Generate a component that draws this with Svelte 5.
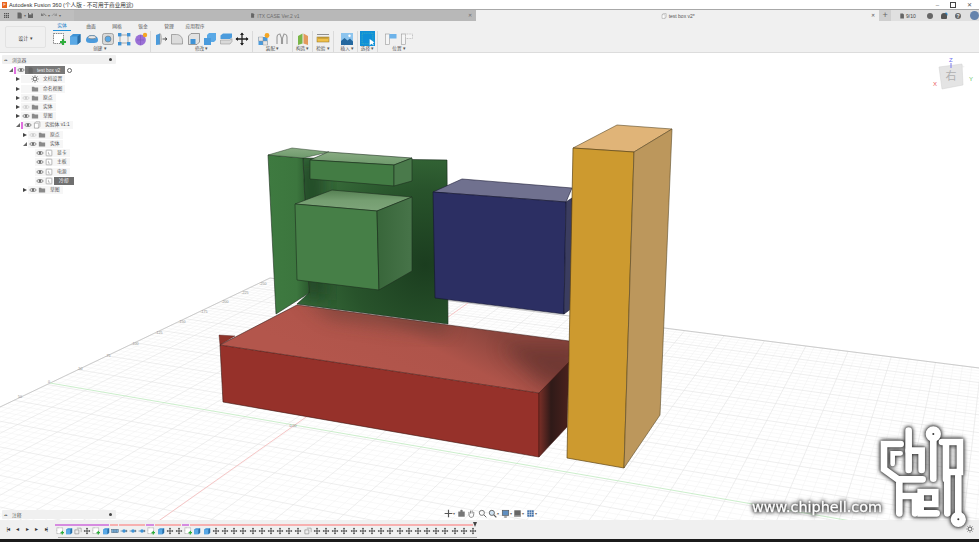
<script>
  // icon bodies, all drawn on a 14x14 box
  const icons = {
    sketch: '<rect x="1.5" y="1.5" width="10" height="10" fill="#fff" stroke="#666" stroke-dasharray="1.5 .8" stroke-width=".8"/><path d="M11 7v6M8 10h6" stroke="#2eae3c" stroke-width="2.2"/>',
    box: '<path d="M2 4.5 5 2h7.5v8L9.5 12.5H2z" fill="#3f93d6"/><path d="M2 4.5h7.5v8H2z" fill="#5aa9e6"/><path d="M9.5 4.5 12.5 2v8l-3 2.5z" fill="#2b6ea6"/>',
    hole: '<path d="M1 8c0-3 3-5 6-5s6 2 6 5-3 3-6 3-6 0-6-3z" fill="#4b9bdc"/><ellipse cx="7" cy="5.2" rx="4" ry="1.6" fill="#e9e9e9" stroke="#666" stroke-width=".5"/>',
    thread: '<rect x="1.5" y="1.5" width="11" height="11" rx="2" fill="#d9d9d9" stroke="#888" stroke-width=".7"/><circle cx="7" cy="7" r="3" fill="#5aa9e6" stroke="#777" stroke-width=".6"/>',
    points: '<path d="M3 3h8v8H3z" fill="none" stroke="#888" stroke-width=".7"/><g fill="#3f93d6"><rect x="1" y="1" width="3.4" height="3.4"/><rect x="10" y="1" width="3.4" height="3.4"/><rect x="1" y="10" width="3.4" height="3.4"/><rect x="10" y="10" width="3.4" height="3.4"/></g>',
    star: '<circle cx="6.5" cy="8" r="5.4" fill="#9a6fd6"/><path d="M3 8h7M6.5 3v10" stroke="#7d54b8" stroke-width=".6"/><circle cx="11" cy="3" r="2.2" fill="#f5a623"/>',
    press: '<path d="M2 3 6 1.5v11L2 13z" fill="#4b9bdc"/><path d="M6 1.5c2 1 2 10 0 11z" fill="#ddd" stroke="#888" stroke-width=".5"/><path d="M8.5 7h4M11 5.5 13 7l-2 1.5" stroke="#333" stroke-width=".8" fill="none"/>',
    fillet: '<path d="M1.5 2.5h5c3.5 0 6 2.8 6 6v3.500h-11z" fill="#dcdcdc" stroke="#888" stroke-width=".7"/>',
    chamfer: '<path d="M1.5 4 4 1.500h8.500v8.500L10 12.500H1.500z" fill="#e2e2e2" stroke="#777" stroke-width=".7"/><path d="M3.500 7h5v5h-5z" fill="#3f93d6"/>',
    combine: '<path d="M1 6h7v7H1z" fill="#4b9bdc"/><path d="M4 3 6 1h7v7l-2 2H8V6H4z" fill="#5aa9e6"/>',
    offset: '<path d="M1.500 3.500 4 1.500h9v4l-2 1.500H1.500z" fill="#4b9bdc"/><path d="M1.500 8h9.500l2-1.500v3l-2 2.500H1.500z" fill="#d9d9d9" stroke="#888" stroke-width=".5"/>',
    move: '<path d="M7 1v12M1 7h12" stroke="#222" stroke-width="1.300"/><path d="M7 .5 5 3h4zM7 13.500 5 11h4zM.5 7 3 5v4zM13.500 7 11 5v4z" fill="#222"/>',
    joint: '<path d="M1.500 5h9v8h-9z" fill="#4b9bdc"/><path d="M6 5V9H1.500V5zM6 9h4.500v4H6z" fill="#e6e6e6" stroke="#888" stroke-width=".4"/><circle cx="10" cy="3.500" r="2.400" fill="#f5a623"/>',
    asm: '<path d="M2 12V5c0-2 2-3 3-3l1.500 4v6M12 12V5c0-2-2-3-3-3L7.500 6v6" fill="none" stroke="#9a9a9a" stroke-width="1.100"/>',
    plane: '<path d="M2 4 6.500 1.500v10L2 13z" fill="#7ab648"/><path d="M7.500 1.500 12 4v9L7.500 11.500z" fill="#e39a5d"/>',
    ruler: '<rect x="1" y="5" width="12" height="5" fill="#f0c04a" stroke="#8a6d1e" stroke-width=".5"/><path d="M3 5v2M5 5v2M7 5v2M9 5v2M11 5v2" stroke="#6b5414" stroke-width=".5"/><path d="M1 2.500h12" stroke="#666" stroke-width=".7"/>',
    image: '<rect x="1" y="1" width="12" height="12" fill="#8cc4ee"/><path d="M1 13V9l3.500-3 3 2.500L10 6.500l3 3V13z" fill="#25689f"/><circle cx="9.500" cy="3.800" r="1.200" fill="#fff"/>',
    select: '<rect width="14" height="14" fill="#0f8fd8"/><rect x="2" y="2" width="10" height="10" fill="none" stroke="#66d0a0" stroke-width=".5" stroke-dasharray="1 1"/><path d="M9 7.500v6l1.500-1.500 2.500 1.500-1-2.200 1.500-.5z" fill="#fff"/>',
    pos1: '<rect x="1.500" y="2" width="4" height="10.500" fill="#f5f5f5" stroke="#999" stroke-width=".6"/><path d="M5.500 2h7v4.500h-7z" fill="#6db3ea"/>',
    pos2: '<rect x="1.500" y="2" width="4" height="10.500" fill="#f5f5f5" stroke="#999" stroke-width=".6"/><path d="M5.500 2h7v4.500h-7z" fill="#f5f5f5" stroke="#999" stroke-width=".5" stroke-dasharray="1 .6"/>',
    copy: '<path d="M1.500 5h7v7h-7z" fill="#eee" stroke="#666" stroke-width=".8"/><path d="M5 2h7.500v7" fill="none" stroke="#666" stroke-width=".8"/>',
    small: '<path d="M1 7h12" stroke="#346fa0" stroke-width="1.200"/><circle cx="7" cy="7" r="3" fill="#3f93d6"/><path d="M11 5v4" stroke="#333"/>',
    dash: '<rect x="1" y="4" width="12" height="6" fill="#7db5e0" stroke="#345" stroke-width=".6"/><path d="M4 4v6M7 4v6M10 4v6" stroke="#345" stroke-width=".6"/>',
    tmove: '<path d="M7 2v10M2 7h10" stroke="#333" stroke-width="1.400"/><path d="M7 1 5.500 3.500h3zM7 13l-1.500-2.500h3zM1 7l2.500-1.500v3zM13 7l-2.500-1.500v3z" fill="#333"/>',
    eye: '<path d="M1 7c2-3.500 10-3.500 12 0-2 3.500-10 3.500-12 0z" fill="none" stroke="currentColor" stroke-width="1.300"/><circle cx="7" cy="7" r="2" fill="currentColor"/>',
    folder: '<path d="M1.500 3h4l1 1.500h6v7h-11z" fill="#8a8a8a"/>',
    gear: '<circle cx="7" cy="7" r="3.300" fill="none" stroke="#7a7a7a" stroke-width="2"/><path d="M7 .5v13M.5 7h13M2.400 2.400l9.200 9.200M11.600 2.400l-9.200 9.200" stroke="#7a7a7a" stroke-width="1.500" stroke-dasharray="2 9.500"/>',
    comp: '<path d="M2.500 4 5 1.500h7v8L9.500 12.500h-7z" fill="#fff" stroke="#777" stroke-width=".9"/><path d="M2.500 4h7v8.500" fill="none" stroke="#777" stroke-width=".7"/>',
    body: '<rect x="2" y="2" width="10" height="10" rx="1" fill="#fff" stroke="#777" stroke-width=".9"/><path d="M6 5v4h3" fill="none" stroke="#777" stroke-width=".8"/>',
    doc: '<path d="M3 1h6l2.500 2.500V13H3z" fill="#666"/>',
    grid: '<path d="M2 2h2.500v2.500H2zM5.800 2h2.500v2.500H5.800zM9.500 2H12v2.500H9.500zM2 5.800h2.500v2.500H2zM5.800 5.800h2.500v2.500H5.800zM9.500 5.800H12v2.500H9.500zM2 9.500h2.500V12H2zM5.800 9.500h2.500V12H5.800zM9.500 9.500H12V12H9.500z" fill="#555"/>',
    save: '<path d="M2 2h8l2 2v8H2z" fill="#666"/><rect x="4" y="2" width="5" height="3" fill="#ccc"/>',
    undo: '<path d="M3 7c2-4 7-4 9 1M3 3v4h4" fill="none" stroke="#666" stroke-width="1.500"/>',
    redo: '<path d="M11 7C9 3 4 3 2 8M11 3v4H7" fill="none" stroke="#888" stroke-width="1.500"/>',
    navorbit: '<path d="M7 1v12M1 7h12" stroke="#555" stroke-width="1.800"/>',
    navcam: '<rect x="2" y="4" width="10" height="8" fill="#777"/><circle cx="7" cy="3" r="2" fill="#777"/>',
    navhand: '<path d="M3 7V4.500M5.500 7V2.500M8 7V2.500M10.500 7V4.500M3 7c0 5 1.500 6 4 6s3.500-2 3.500-6" fill="none" stroke="#666" stroke-width="1.200"/>',
    navzoom: '<circle cx="6" cy="6" r="4" fill="none" stroke="#666" stroke-width="1.300"/><path d="M9 9l4 4" stroke="#666" stroke-width="1.500"/>',
    navfit: '<circle cx="6" cy="6" r="4" fill="#cfe2f2" stroke="#555" stroke-width="1.300"/><path d="M9 9l4 4" stroke="#555" stroke-width="1.800"/>',
    navdisp: '<rect x="2" y="2" width="10" height="8" fill="#5f8ec0" stroke="#555"/><path d="M5 12.500h4" stroke="#555" stroke-width="1.500"/>',
    navgrid: '<rect x="2" y="2" width="10" height="10" fill="#666"/><rect x="2" y="10" width="10" height="2" fill="#aaa"/>',
    navtable: '<path d="M2 2h10v10H2z" fill="#3f6fa8"/><path d="M2 5.300h10M2 8.600h10M5.300 2v10M8.600 2v10" stroke="#fff" stroke-width=".7"/>'
  };

  const groups = [
    { label: '创建', items: ['sketch', 'box', 'hole', 'thread', 'points', 'star'] },
    { label: '修改', items: ['press', 'fillet', 'chamfer', 'combine', 'offset', 'move'] },
    { label: '装配', items: ['joint', 'asm'], cls: 'roomy' },
    { label: '构造', items: ['plane'] },
    { label: '检验', items: ['ruler'] },
    { label: '插入', items: ['image'], cls: 'push' },
    { label: '选择', items: ['select'] },
    { label: '位置', items: ['pos1', 'pos2'], cls: 'push2', last: true }
  ];

  const tabs = ['实体', '曲面', '网格', '钣金', '管理', '应用程序'];

  const tree = [
    { x: 7, tri: 'open', bar: true, eye: 'on', ic: 'doc', label: 'test box v2', root: true },
    { x: 14, tri: 'shut', ic: 'gear', label: '文档设置' },
    { x: 14, tri: 'shut', ic: 'folder', label: '命名视图' },
    { x: 14, tri: 'shut', eye: 'off', ic: 'folder', label: '原点' },
    { x: 14, tri: 'shut', eye: 'off', ic: 'folder', label: '实体' },
    { x: 14, tri: 'shut', eye: 'on', ic: 'folder', label: '草图' },
    { x: 14, tri: 'open', bar: true, eye: 'on', ic: 'comp', label: '实验体 v1:1' },
    { x: 21, tri: 'shut', eye: 'off', ic: 'folder', label: '原点' },
    { x: 21, tri: 'open', eye: 'on', ic: 'folder', label: '实体' },
    { x: 28, eye: 'on', ic: 'body', label: '显卡' },
    { x: 28, eye: 'on', ic: 'body', label: '主板' },
    { x: 28, eye: 'on', ic: 'body', label: '电源' },
    { x: 28, eye: 'on', ic: 'body', label: '冷却', picked: true },
    { x: 21, tri: 'shut', eye: 'on', ic: 'folder', label: '草图' }
  ];

  const strips = [
    { w: 53.5, c: '#d68be0' }, { w: 8, c: '#f7b0b0' }, { w: 26, c: '#f7b0b0' }, { w: 8, c: '#d68be0' },
    { w: 26, c: '#f7b0b0' }, { w: 7.5, c: '#d68be0' }, { w: 283, c: '#f7b0b0' }
  ];

  const steps = ['sketch', 'box', 'copy', 'tmove', 'sketch', 'box', 'dash', 'small', 'small', 'small',
    'sketch', 'box', 'tmove', 'tmove', 'sketch', 'box', 'box'];
  for (let i = steps.length; i < 46; i++) steps.push(i === 27 ? 'copy' : 'tmove');

  const nav = ['navorbit', 'navcam', 'navhand', 'navzoom', 'navfit', 'navdisp', 'navgrid', 'navtable'];

  // ruler marks along the left edge of the floor grid
  const marks = [
    [263, 284, '-250'], [245, 293, '-225'], [225, 302, '-200'], [204, 312, '-175'], [182, 322, '-150'], [159, 333, '-125'],
    [135, 344, '-100'], [108, 356, '-75'], [80, 369, '-50'], [49, 382, '0'], [20, 397, '50']
  ];

  // perspective floor grid: map a unit square onto the floor quad
  function homography(p0, p1, p2, p3) {
    const sx = p0[0] - p1[0] + p2[0] - p3[0];
    const sy = p0[1] - p1[1] + p2[1] - p3[1];
    const dx1 = p1[0] - p2[0], dx2 = p3[0] - p2[0];
    const dy1 = p1[1] - p2[1], dy2 = p3[1] - p2[1];
    const den = dx1 * dy2 - dx2 * dy1;
    const g = (sx * dy2 - dx2 * sy) / den;
    const h = (dx1 * sy - sx * dy1) / den;
    const a = p1[0] - p0[0] + g * p1[0], b = p3[0] - p0[0] + h * p3[0];
    const d = p1[1] - p0[1] + g * p1[1], e = p3[1] - p0[1] + h * p3[1];
    return (u, v) => {
      const w = g * u + h * v + 1;
      return [(a * u + b * v + p0[0]) / w, (d * u + e * v + p0[1]) / w];
    };
  }

  function meet(a, b, c, d) {
    const t = ((c[0] - a[0]) * (d[1] - c[1]) - (c[1] - a[1]) * (d[0] - c[0])) /
      ((b[0] - a[0]) * (d[1] - c[1]) - (b[1] - a[1]) * (d[0] - c[0]));
    return [a[0] + t * (b[0] - a[0]), a[1] + t * (b[1] - a[1])];
  }

  const corner = [270, 278], right = [1500, 434], left = [-500, 646];
  const map = homography(corner, right, meet(left, [-2904, -125], right, [1033, -87]), left);
  const cellsU = 145, cellsV = 100;

  function line(a, b) {
    return `M${a[0].toFixed(1)} ${a[1].toFixed(1)}L${b[0].toFixed(1)} ${b[1].toFixed(1)}`;
  }

  let minor = '';
  let major = '';
  for (let i = 0; i <= cellsU; i++) {
    const seg = line(map(i / cellsU, 0), map(i / cellsU, 1));
    if (i % 5 === 0) major += seg;
    else minor += seg;
  }
  for (let i = 0; i <= cellsV; i++) {
    const seg = line(map(0, i / cellsV), map(1, i / cellsV));
    if (i % 5 === 0) major += seg;
    else minor += seg;
  }
</script>

{#snippet icon(name, size = 14)}
  <svg class="ico" width={size} height={size} viewBox="0 0 14 14">{@html icons[name]}</svg>
{/snippet}

<div class="app">
  <div class="titlebar">
    <span class="logo">F</span>
    <span class="title">Autodesk Fusion 360 (个人版 - 不可用于商业用途)</span>
    <div class="winbtns">
      <span>–</span><span class="restore"></span><span class="cross">✕</span>
    </div>
  </div>

  <div class="tabbar">
    <div class="quick">
      {@render icon('grid', 7)}
      <span class="gap"></span>
      {@render icon('doc', 7)}<i class="mini">▾</i>
      {@render icon('save', 7)}
      <span class="gap"></span>
      {@render icon('undo', 7)}<i class="mini">▾</i>
      {@render icon('redo', 7)}<i class="mini">▾</i>
    </div>
    <div class="tab">
      <span class="tabname">{@render icon('doc', 5)} ITX CASE Ver.2 v1</span>
      <span class="tabx">✕</span>
    </div>
    <div class="tab active">
      <span class="tabname">{@render icon('comp', 6)} test box v2*</span>
      <span class="tabx">✕</span>
    </div>
    <div class="tabplus">+</div>
    <div class="status">
      <span class="jobs">{@render icon('doc', 6)} 9/10</span>
      <span class="dot"></span>
      <span class="bell"></span>
      <span class="help">?</span>
      <span class="avatar"></span>
    </div>
  </div>

  <div class="ribbon">
    <button class="design" type="button">设计 ▾</button>
    <div class="ribbon-main">
      <div class="subtabs">
        {#each tabs as t, i}
          <span class:current={i === 0}>{t}</span>
        {/each}
      </div>
      <div class="groups">
        {#each groups as g}
          <div class="group {g.cls || ''}" class:last={g.last}>
            <div class="cells">
              {#each g.items as it}
                <span class="cell">{@render icon(it, it === 'select' ? 15 : 14)}</span>
              {/each}
            </div>
            <div class="glabel">{g.label} ▾</div>
          </div>
        {/each}
      </div>
    </div>
  </div>

  <div class="viewport">
    <svg class="scene" viewBox="0 53 979 467" width="979" height="467">
      <defs>
        <radialGradient id="backShade" gradientUnits="userSpaceOnUse" cx="425" cy="265" r="125">
          <stop offset="0" stop-color="#1b3d1f" />
          <stop offset="0.6" stop-color="#28532b" />
          <stop offset="1" stop-color="#376b39" />
        </radialGradient>
        <linearGradient id="pillar" x1="0" x2="1" y1="0" y2="0">
          <stop offset="0" stop-color="#3e7a40" />
          <stop offset="0.7" stop-color="#3c763e" />
          <stop offset="1" stop-color="#2b5a2e" />
        </linearGradient>
        <linearGradient id="greenTop" x1="0" x2="0" y1="0" y2="1">
          <stop offset="0" stop-color="#88ab82" />
          <stop offset="1" stop-color="#6f9a6c" />
        </linearGradient>
        <linearGradient id="cubeTop" x1="0" x2="0" y1="0" y2="1">
          <stop offset="0" stop-color="#557f52" />
          <stop offset="0.5" stop-color="#759e71" />
          <stop offset="1" stop-color="#7ea57a" />
        </linearGradient>
        <linearGradient id="cubeSide" x1="0" x2="1" y1="0" y2="0">
          <stop offset="0" stop-color="#38663a" />
          <stop offset="1" stop-color="#477449" />
        </linearGradient>
        <linearGradient id="redTop" gradientUnits="userSpaceOnUse" x1="400" y1="400" x2="445" y2="310">
          <stop offset="0" stop-color="#b3564c" />
          <stop offset="0.6" stop-color="#af544a" />
          <stop offset="1" stop-color="#8c463e" />
        </linearGradient>
        <linearGradient id="redSide" x1="0" x2="1" y1="0" y2="0">
          <stop offset="0" stop-color="#7a2f27" />
          <stop offset="0.4" stop-color="#2f1a18" />
          <stop offset="1" stop-color="#4a211d" />
        </linearGradient>
        <clipPath id="redClip"><polygon points="220,345 297,305 569,341 569,364 539,393" /></clipPath>
        <clipPath id="backClip"><polygon points="303,158 447,160 448,324 297,304 309,293" /></clipPath>
        <filter id="soft" x="-30%" y="-30%" width="160%" height="160%"><feGaussianBlur stdDeviation="9" /></filter>
      </defs>

      <rect x="0" y="53" width="979" height="467" fill="#fff" />
      <path d={minor} stroke="#f1f1f1" stroke-width="0.5" fill="none" />
      <path d={major} stroke="#e2e2e2" stroke-width="0.6" fill="none" />
      <path d="M270 278 0 407M270 278 979 368" stroke="#bdbdbd" stroke-width="0.7" fill="none" />
      <path d="M50 383 979 543" stroke="#bfeabf" stroke-width="0.8" />
      <path d="M468 303 150 527" stroke="#f4b8b8" stroke-width="0.8" />
      <g class="ticks">
        {#each marks as m}
          <text x={m[0]} y={m[1] + 1} text-anchor="middle">{m[2]}</text>
        {/each}
        <text x="293" y="427" text-anchor="middle">0.00</text>
      </g>

      <!-- green plate -->
      <polygon points="303,158 447,160 448,324 297,304 309,293" fill="url(#backShade)" stroke="#16291a" stroke-width="0.6" />
      <g clip-path="url(#backClip)">
        <polygon points="300,160 322,160 328,300 300,300" fill="#1d3d20" opacity="0.75" filter="url(#soft)" />
      </g>
      <polygon points="268,155 303,158 309,293 276,314" fill="url(#pillar)" stroke="#1d2f1e" stroke-width="0.6" />
      <polygon points="268,155 292,148 329,152 303,158" fill="url(#greenTop)" stroke="#2a3f2a" stroke-width="0.5" />

      <!-- small box -->
      <polygon points="310,160 328,152 412,158 394,165" fill="url(#greenTop)" stroke="#1d2f1e" stroke-width="0.6" />
      <polygon points="310,160 394,165 394,186 310,179" fill="#437c44" stroke="#1d2f1e" stroke-width="0.6" />
      <polygon points="394,165 412,158 412,181 394,186" fill="#4a7a4b" stroke="#1d2f1e" stroke-width="0.6" />

      <!-- big cube -->
      <polygon points="295,204 332,190 412,197 377,211" fill="url(#cubeTop)" stroke="#1d2f1e" stroke-width="0.6" />
      <polygon points="295,204 377,211 379,290 297,280" fill="#467f47" stroke="#1d2f1e" stroke-width="0.6" />
      <polygon points="377,211 412,197 412,271 379,290" fill="url(#cubeSide)" stroke="#1d2f1e" stroke-width="0.6" />

      <!-- blue block -->
      <polygon points="433,192 462,179 572,188 566,202" fill="#70718f" stroke="#1c1d38" stroke-width="0.6" />
      <polygon points="433,192 566,202 564,314 435,298" fill="#2c2f63" stroke="#14152e" stroke-width="0.6" />
      <polygon points="566,202 572,198 572,308 564,314" fill="#3b3d60" stroke="#14152e" stroke-width="0.6" />

      <!-- red block -->
      <polygon points="219,335 235,336 220,345" fill="#8f332a" stroke="#4a1d18" stroke-width="0.4" />
      <polygon points="220,345 297,305 569,341 569,364 539,393" fill="url(#redTop)" />
      <g clip-path="url(#redClip)">
        <polygon points="300,295 445,315 450,335 330,318" fill="#5b3a30" opacity="0.55" filter="url(#soft)" />
        <polygon points="500,345 580,345 580,385 545,385" fill="#5a2f2a" opacity="0.55" filter="url(#soft)" />
      </g>
      <path d="M220 345 297 305 569 341M569 364 539 393" fill="none" stroke="#3f1f1b" stroke-width="0.6" />
      <polygon points="220,345 539,393 539,457 223,402" fill="#96312a" stroke="#3d1511" stroke-width="0.6" />
      <polygon points="539,393 569,362 567,427 539,457" fill="url(#redSide)" stroke="#3d1511" stroke-width="0.5" />

      <!-- orange board -->
      <polygon points="573,148 617,125 672,129 634,152" fill="#e0b478" stroke="#5b4a26" stroke-width="0.6" />
      <polygon points="573,148 634,152 624,468 567,458" fill="#cd9a2f" stroke="#5b4416" stroke-width="0.7" />
      <polygon points="634,152 672,129 660,415 624,468" fill="#bc975c" stroke="#5b4a26" stroke-width="0.6" />
    </svg>

    <div class="browser">
      <div class="panelhead"><span class="collapse">◂▸</span><span class="phtext">浏览器</span><span class="pin"></span></div>
      <div class="tree">
        {#each tree as row}
          <div class="row" style="padding-left: {row.x}px">
            <span class="tri">
              {#if row.tri === 'open'}<b class="tri-open"></b>{:else if row.tri === 'shut'}<b class="tri-shut"></b>{/if}
            </span>
            {#if row.bar}<span class="pinkbar"></span>{/if}
            <span class="slot eye" class:off={row.eye === 'off'}>
              {#if row.eye}{@render icon('eye', 8)}{/if}
            </span>
            {#if row.root}
              <span class="rootchip">{@render icon('doc', 7)}<em>{row.label}</em></span>
              <span class="target"></span>
            {:else}
              <span class="slot">{@render icon(row.ic, 8)}</span>
              <span class="lbl" class:picked={row.picked}>{row.label}</span>
            {/if}
          </div>
        {/each}
      </div>
    </div>

    <div class="cube">
      <svg width="44" height="40" viewBox="0 0 44 40">
        <polygon points="11,12 32,8 35,10 14,14" fill="#f2f2f2" />
        <polygon points="9,10 32,7 33,28 12,32" fill="#e4e4e4" stroke="#d0d0d0" stroke-width="0.5" />
        <path d="M21 6V11" stroke="#7a7aee" stroke-width="1" />
        <text class="axis" x="19" y="5" fill="#6c6cf0">Z</text>
        <text class="axis" x="39" y="24" fill="#5fc65f">Y</text>
        <text class="axis" x="3" y="29" fill="#ea5a5a">X</text>
        <text class="face" x="15.500" y="23">右</text>
      </svg>
    </div>

    <div class="comments">
      <span class="collapse">◂▸</span><span class="phtext">注释</span><span class="pin"></span>
    </div>

    <div class="navbar">
      {#each nav as n, i}
        <span class="navitem" class:wide={i === 0 || i > 3}>{@render icon(n, 9)}{#if i === 0 || i > 3}<i class="mini">▾</i>{/if}</span>
      {/each}
    </div>
  </div>

  <div class="timeline">
    <div class="player">
      <span class="pb">|◂</span><span class="pb">◂</span><span class="pb">▸</span><span class="pb">▸</span><span class="pb">▸|</span>
    </div>
    <div class="track">
      <div class="strips">
        {#each strips as s}
          <span style="width: {s.w}px; background: {s.c}"></span>
        {/each}
      </div>
      <div class="steps">
        {#each steps as s}
          <span class="step">{@render icon(s, 8)}</span>
        {/each}
      </div>
      <div class="rule"></div>
      <span class="marker"></span>
    </div>
    <span class="tlgear">{@render icon('gear', 8)}</span>
  </div>
  <div class="taskbar"></div>

  <svg class="watermark" width="979" height="542" viewBox="0 0 979 542">
    <g transform="translate(740 420) scale(0.3333)" fill="none" stroke="#fff" stroke-width="20" stroke-linecap="round">
      <path d="M482 72H432V148L474 178H548" />
      <path d="M482 100H458V132" stroke-width="14" />
      <path d="M506 32V150" />
      <path d="M506 92H545V150" />
      <path d="M580 62V176" />
      <circle cx="580" cy="42" r="13" />
      <path d="M606 66H660V156H618V66M618 156V178" />
      <path d="M478 190V280" />
      <path d="M478 228H525V280" />
      <path d="M590 280H542V216H586V252H548" />
      <path d="M622 160V280" />
      <path d="M655 168V280" />
      <circle cx="655" cy="298" r="13" />
    </g>
    <text class="wm" x="752" y="512">www.chiphell.com</text>
  </svg>
</div>

<style>
  :global(body) {
    margin: 0;
    background: #fff;
  }

  .app {
    position: relative;
    width: 979px;
    height: 542px;
    display: flex;
    flex-direction: column;
    overflow: hidden;
    font-family: "Liberation Sans", "Noto Sans CJK SC", sans-serif;
    color: #444;
    font-size: 5px;
  }

  .ico {
    display: block;
    flex: none;
  }

  .mini {
    font-style: normal;
    font-size: 4px;
    color: #666;
  }

  .titlebar {
    height: 9px;
    background: #fff;
    display: flex;
    align-items: center;
    flex: none;
  }

  .logo {
    width: 5px;
    height: 6px;
    margin: 0 2px 0 2px;
    background: #e8641e;
    color: #fff;
    font-size: 4px;
    line-height: 6px;
    text-align: center;
  }

  .title {
    font-size: 5.600px;
    color: #333;
  }

  .winbtns {
    margin-left: auto;
    display: flex;
    align-items: center;
    gap: 11px;
    padding-right: 7px;
    font-size: 6px;
    color: #555;
  }

  .restore {
    width: 4px;
    height: 4px;
    border: 1px solid #444;
  }

  .cross {
    font-size: 5.500px;
  }

  .tabbar {
    height: 12px;
    flex: none;
    display: flex;
    background: #e4e4e4;
    border-top: 1px solid #a8a8a8;
    box-sizing: border-box;
  }

  .quick {
    width: 74px;
    background: #bebebe;
    display: flex;
    align-items: center;
    gap: 1px;
    padding-left: 3px;
    box-sizing: border-box;
  }

  .gap {
    width: 4px;
  }

  .tab {
    width: 405.500px;
    background: #b8b8b8;
    display: flex;
    align-items: center;
    justify-content: center;
    position: relative;
    color: #6d6d6d;
  }

  .tab.active {
    background: #f0f0f0;
    color: #555;
  }

  .tabname {
    display: flex;
    align-items: center;
    gap: 2px;
  }

  .tabx {
    position: absolute;
    right: 4px;
    font-size: 4.500px;
  }

  .tabplus {
    width: 12px;
    background: #cfcfcf;
    text-align: center;
    font-size: 9px;
    line-height: 11px;
    color: #666;
  }

  .status {
    flex: 1;
    display: flex;
    align-items: center;
    padding-left: 8px;
    gap: 8px;
    background: #e0e0e0;
  }

  .jobs {
    display: flex;
    align-items: center;
    gap: 1px;
    width: 18px;
    margin-right: 2px;
  }

  .dot,
  .bell,
  .help {
    width: 6px;
    height: 6px;
    border-radius: 50%;
    background: #666;
  }

  .bell {
    background: #555;
    border-radius: 3px 3px 1px 1px;
    box-shadow: 2px -2px 0 -1.500px #2a8fd8;
  }

  .help {
    color: #fff;
    font-size: 5px;
    line-height: 6px;
    text-align: center;
    font-weight: 700;
  }

  .avatar {
    width: 9px;
    height: 9px;
    border-radius: 50%;
    background: #6584ad;
    margin-left: 1px;
  }

  .ribbon {
    height: 32px;
    flex: none;
    background: #f0f0f0;
    border-bottom: 1px solid #dcdcdc;
    box-sizing: border-box;
    display: flex;
    align-items: flex-start;
    padding-left: 5px;
  }

  .design {
    width: 41px;
    height: 22px;
    margin: 5px 5px 0 0;
    padding: 0;
    background: #f0f0f0;
    border: 1px solid #e2e2e2;
    border-radius: 2px;
    font: inherit;
    color: #444;
  }

  .subtabs {
    height: 10px;
    display: flex;
    align-items: center;
    padding-left: 2px;
    font-size: 4.800px;
    color: #555;
  }

  .subtabs span {
    width: 26px;
    text-align: center;
    line-height: 9px;
  }

  .subtabs .current {
    width: 18px;
    margin-right: 7px;
    color: #1c7fc8;
    border-bottom: 1px solid #1c90dc;
  }

  .groups {
    display: flex;
  }

  .group {
    padding: 0 1.500px;
    border-right: 1px solid #dadada;
    height: 21px;
  }

  .group:first-child {
    padding-left: 0;
  }

  .group.last {
    border-right: none;
  }

  .group.roomy .cell {
    width: 18px;
  }

  .group.push {
    margin-left: 4px;
  }

  .group.push2 {
    margin-left: 3px;
  }

  .cells {
    display: flex;
    height: 15px;
    align-items: center;
  }

  .cell {
    width: 16.300px;
    display: flex;
    justify-content: center;
  }

  .glabel {
    text-align: center;
    font-size: 4.600px;
    line-height: 6px;
    color: #555;
    white-space: nowrap;
  }

  .viewport {
    position: relative;
    flex: none;
    height: 467px;
    background: #fff;
  }

  .scene {
    position: absolute;
    inset: 0;
    display: block;
  }

  .ticks text {
    font-size: 3.600px;
    fill: #8c8c8c;
  }

  .browser {
    position: absolute;
    top: 2px;
    left: 2px;
    width: 114px;
  }

  .panelhead,
  .comments {
    height: 9px;
    display: flex;
    align-items: center;
    background: #f0f0f0;
    border-radius: 1px;
    color: #666;
    padding: 0 2px;
    box-sizing: border-box;
  }

  .collapse {
    font-size: 3px;
    color: #333;
    width: 8px;
  }

  .phtext {
    font-size: 4.800px;
  }

  .pin {
    width: 3.500px;
    height: 3.500px;
    border-radius: 50%;
    background: #444;
    margin-left: auto;
    margin-right: 2px;
  }

  .tree {
    margin-top: 1.500px;
  }

  .row {
    height: 9.230px;
    display: flex;
    align-items: center;
    margin-left: -2px;
    box-sizing: border-box;
  }

  .tri {
    width: 7px;
    display: flex;
    justify-content: center;
    flex: none;
  }

  .tri-shut {
    width: 0;
    height: 0;
    border-left: 4px solid #444;
    border-top: 2.500px solid transparent;
    border-bottom: 2.500px solid transparent;
    position: relative;
  }

  .tri-open {
    width: 0;
    height: 0;
    border-bottom: 4px solid #666;
    border-left: 4px solid transparent;
  }

  .pinkbar {
    width: 2px;
    height: 7px;
    background: #e06fe0;
    flex: none;
  }

  .slot {
    width: 9px;
    height: 8px;
    display: flex;
    justify-content: center;
    background: #f6f6f6;
    flex: none;
  }

  .eye {
    color: #666;
  }

  .eye.off {
    color: #ccc;
  }

  .lbl {
    margin-left: 0;
    padding: 0 3px 0 4px;
    background: #f6f6f6;
    font-size: 4.800px;
    line-height: 8px;
    color: #555;
  }

  .lbl.picked {
    background: #6f6f6f;
    color: #fff;
    margin-left: 1px;
    padding: 0 5px;
  }

  .rootchip {
    height: 8px;
    width: 40px;
    background: #787878;
    color: #eee;
    display: flex;
    align-items: center;
    gap: 3px;
    padding-left: 2px;
    box-sizing: border-box;
    flex: none;
  }

  .rootchip em {
    font-style: normal;
    font-size: 4.800px;
  }

  .target {
    width: 3px;
    height: 3px;
    margin-left: 1.500px;
    border: 1px solid #666;
    border-radius: 50%;
    background: #fff;
  }

  .cube {
    position: absolute;
    top: 4px;
    left: 930px;
    width: 44px;
    height: 40px;
  }

  .axis {
    font-size: 6px;
  }

  .face {
    font-size: 11px;
    fill: #b0b0b0;
    font-family: "Noto Sans CJK SC", sans-serif;
  }

  .comments {
    position: absolute;
    left: 2px;
    bottom: 1px;
    width: 114px;
  }

  .navbar {
    position: absolute;
    left: 444px;
    bottom: 1.500px;
    display: flex;
    align-items: center;
    height: 10px;
  }

  .navitem {
    width: 10.500px;
    display: flex;
    align-items: center;
  }

  .navitem.wide {
    width: 12.500px;
  }

  .timeline {
    height: 18.500px;
    flex: none;
    background: #f0f0f0;
    display: flex;
    position: relative;
  }

  .player {
    width: 55px;
    padding-left: 3px;
    display: flex;
    align-items: center;
    height: 18px;
    box-sizing: border-box;
  }

  .pb {
    width: 9.500px;
    font-size: 5.500px;
    letter-spacing: -1px;
    color: #333;
    text-align: center;
  }

  .track {
    position: relative;
    width: 422px;
  }

  .strips {
    display: flex;
    gap: 1px;
    margin-top: 3.500px;
    height: 2px;
  }

  .steps {
    display: flex;
    margin-top: 1px;
    height: 8px;
  }

  .step {
    width: 9.200px;
    display: flex;
    justify-content: center;
    flex: none;
  }

  .rule {
    height: 2px;
    margin: 1px 0 0 3px;
    border-bottom: 1px solid #aaa;
    box-sizing: border-box;
  }

  .marker {
    position: absolute;
    right: 0;
    top: 2px;
    width: 0;
    height: 0;
    border-left: 2.500px solid transparent;
    border-right: 2.500px solid transparent;
    border-top: 5px solid #444;
  }

  .tlgear {
    position: absolute;
    right: 5px;
    top: 5px;
  }

  .taskbar {
    flex: 1;
    background: #1b1b1b;
  }

  .watermark {
    position: absolute;
    inset: 0;
    pointer-events: none;
    filter: drop-shadow(0 0 2px #333) drop-shadow(0 0 1px #555);
  }

  .wm {
    font-family: "DejaVu Sans", sans-serif;
    font-size: 14.400px;
    fill: #fff;
    stroke: #fff;
    stroke-width: 0.3px;
  }
</style>
